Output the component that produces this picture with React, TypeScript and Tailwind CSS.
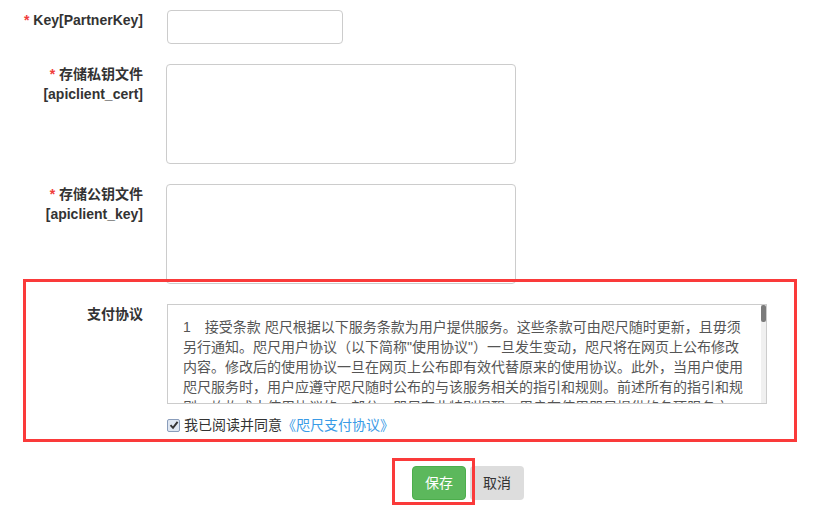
export default function App() {
  const lines = [
    "1\u3000接受条款 咫尺根据以下服务条款为用户提供服务。这些条款可由咫尺随时更新，且毋须",
    "另行通知。咫尺用户协议（以下简称\"使用协议\"）一旦发生变动，咫尺将在网页上公布修改",
    "内容。修改后的使用协议一旦在网页上公布即有效代替原来的使用协议。此外，当用户使用",
    "咫尺服务时，用户应遵守咫尺随时公布的与该服务相关的指引和规则。前述所有的指引和规",
    "则，均构成本使用协议的一部分。咫尺有此特别提醒，用户在使用咫尺提供的各项服务之",
  ];
  return (
    <div className="relative w-[830px] h-[507px] overflow-hidden bg-white text-[14px] text-[#333] font-['Liberation_Sans','Noto_Sans_CJK_SC',sans-serif]">
      <div className="flex flex-col pt-[10px]">
        {/* Row 1 */}
        <div className="flex">
          <label className="w-[143px] shrink-0 text-right font-bold leading-[20px]">
            <span className="text-[#f03c3c]">*</span> Key[PartnerKey]
          </label>
          <div className="ml-[24px]">
            <input
              readOnly
              className="block w-[176px] h-[34px] border border-[#ccc] rounded-[4px] bg-white outline-none"
            />
          </div>
        </div>
        {/* Row 2 */}
        <div className="flex mt-[20px]">
          <label className="w-[143px] shrink-0 text-right font-bold leading-[20px]">
            <span className="block">
              <span className="text-[#f03c3c]">*</span> 存储私钥文件
            </span>
            <span className="block leading-[21px]">[apiclient_cert]</span>
          </label>
          <div className="ml-[23px]">
            <textarea
              readOnly
              className="block w-[350px] h-[100px] border border-[#ccc] rounded-[4px] bg-white outline-none resize-none"
            />
          </div>
        </div>
        {/* Row 3 */}
        <div className="flex mt-[20px]">
          <label className="w-[143px] shrink-0 text-right font-bold leading-[20px]">
            <span className="block">
              <span className="text-[#f03c3c]">*</span> 存储公钥文件
            </span>
            <span className="block leading-[21px]">[apiclient_key]</span>
          </label>
          <div className="ml-[23px]">
            <textarea
              readOnly
              className="block w-[350px] h-[100px] border border-[#ccc] rounded-[4px] bg-white outline-none resize-none"
            />
          </div>
        </div>
        {/* Agreement */}
        <div className="relative mt-[20px]">
          <div className="flex">
            <label className="w-[143px] shrink-0 text-right font-bold leading-[20px]">支付协议</label>
            <div className="ml-[24px] w-[600px] h-[100px] border border-[#ccc] flex">
              <div className="flex-1 overflow-hidden pl-[15px] pt-[12px] text-[#555] leading-[20px]">
                {lines.map((l, i) => (
                  <div key={i} className="whitespace-nowrap">
                    {l}
                  </div>
                ))}
              </div>
              <div className="w-[5px] bg-[#f0f0f0] flex flex-col">
                <div className="h-[17px] bg-[#7b7b7b] rounded-[2px]" />
              </div>
            </div>
          </div>
          <div className="flex items-center ml-[167px] mt-[11px] h-[20px] leading-[20px]">
            <span className="w-[13px] h-[13px] border border-[#8a9dbb] bg-[#dfe7f2] rounded-[2px] flex items-center justify-center">
              <svg width="10" height="10" viewBox="0 0 10 10">
                <path d="M1.5 5.2 L4 7.8 L8.6 1.8" fill="none" stroke="#333" strokeWidth="1.9" />
              </svg>
            </span>
            <span className="ml-[4px] text-[#333]">我已阅读并同意</span>
            <span className="text-[#3a9be6]">《咫尺支付协议》</span>
          </div>
          <div className="absolute left-[23px] top-[-25px] w-[774px] h-[163px] border-[3px] border-[#fa3a3a]" />
        </div>
        {/* Buttons */}
        <div className="flex mt-[31px] pl-[412px] gap-[4px]">
          <div className="relative">
            <button className="w-[54px] h-[34px] bg-[#5cb85c] border border-[#4cae4c] text-white rounded-[4px] leading-[20px]">
              保存
            </button>
            <div className="absolute left-[-20px] top-[-8px] w-[83px] h-[47px] border-[3px] border-[#fa3a3a]" />
          </div>
          <button className="w-[54px] h-[34px] bg-[#ddd] text-[#333] rounded-[4px] leading-[20px]">取消</button>
        </div>
      </div>
    </div>
  );
}
